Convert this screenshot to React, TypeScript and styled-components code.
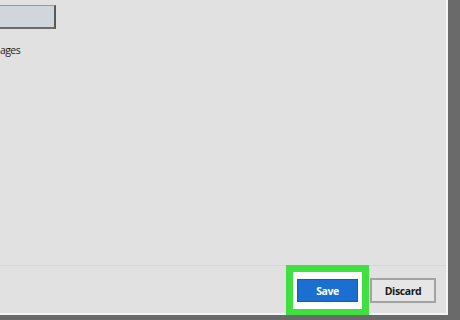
import React from "react";
import styled, { createGlobalStyle } from "styled-components";

const Global = createGlobalStyle`
  html, body { margin: 0; padding: 0; background: #6a6a6a; }
  body { width: 460px; height: 320px; overflow: hidden; font-family: "Open Sans", "Liberation Sans", sans-serif; }
`;

const Window = styled.div`
  box-sizing: border-box;
  width: 448px;
  height: 315px;
  background: #e1e1e1;
  border-right: 2px solid #f4f4f4;
  border-bottom: 2px solid #f4f4f4;
  display: flex;
  flex-direction: column;
`;

const Body = styled.div`
  flex: 1;
  padding-top: 5px;
  display: flex;
  flex-direction: column;
  align-items: flex-start;
`;

const Field = styled.div`
  box-sizing: border-box;
  width: 56px;
  height: 24px;
  background: #d1d5dc;
  border-top: 1px solid #9a9a9a;
  border-right: 2px solid #585858;
  border-bottom: 2px solid #6a6a6a;
`;

const Label = styled.div`
  margin-top: 14px;
  font-size: 10.5px;
  letter-spacing: -0.6px;
  line-height: 14px;
  color: #1e1e1e;
`;

const Footer = styled.div`
  box-sizing: border-box;
  height: 48px;
  border-top: 1px solid #d6d6d6;
  margin-top: -1px;
  display: flex;
  justify-content: flex-end;
  align-items: flex-start;
  padding-right: 10px;
`;

const Highlight = styled.div`
  border: 7px solid #3fe03f;
  border-bottom-width: 6px;
  background: #ffffff;
  padding: 7px 4px;
  margin-top: -1px;
`;

const Button = styled.button<{ $primary?: boolean }>`
  box-sizing: border-box;
  height: ${(p) => (p.$primary ? 23 : 25)}px;
  width: ${(p) => (p.$primary ? 61 : 66)}px;
  margin: 0;
  padding: 0;
  font-family: "Open Sans", "Liberation Sans", sans-serif;
  font-size: 10.5px;
  font-weight: 700;
  letter-spacing: -0.4px;
  display: flex;
  align-items: center;
  justify-content: center;
  background: ${(p) => (p.$primary ? "#1b6fd0" : "#e6e6e6")};
  color: ${(p) => (p.$primary ? "#ffffff" : "#1a1a1a")};
  border: ${(p) => (p.$primary ? "1px solid #155db3" : "2px solid #a3a3a3")};
  margin-top: ${(p) => (p.$primary ? 0 : 12)}px;
  margin-left: ${(p) => (p.$primary ? 0 : 1)}px;
`;

export default function App() {
  return (
    <>
      <Global />
      <Window>
        <Body>
          <Field />
          <Label>ages</Label>
        </Body>
        <Footer>
          <Highlight>
            <Button $primary>Save</Button>
          </Highlight>
          <Button>Discard</Button>
        </Footer>
      </Window>
    </>
  );
}
